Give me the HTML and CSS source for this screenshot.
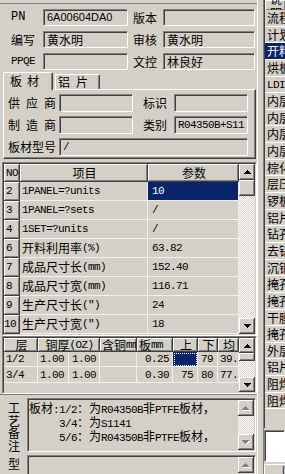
FILE: index.html
```html
<!DOCTYPE html>
<html lang="zh">
<head>
  <meta charset="UTF-8">
  <meta name="viewport" content="width=device-width, initial-scale=1.0">
  <title>板材资料</title>
  <link rel="stylesheet" href="styles.css">
</head>
<body>
  <div class="screen">
    <div class="main">
      <div class="topbar"></div>

      <div class="info">
        <div class="row">
          <span class="lbl m big">PN</span>
          <div class="fld s">6A00604DA0</div>
          <span class="lbl2">版本</span>
          <div class="fld"></div>
        </div>
        <div class="row">
          <span class="lbl">编写</span>
          <div class="fld">黄水明</div>
          <span class="lbl2">审核</span>
          <div class="fld">黄水明</div>
        </div>
        <div class="row">
          <span class="lbl m">PPQE</span>
          <div class="fld"></div>
          <span class="lbl2">文控</span>
          <div class="fld">林良好</div>
        </div>
      </div>

      <div class="tabs">
        <div class="tab active">板材</div>
        <div class="tab">铝片</div>
      </div>
      <div class="page">
        <span class="plbl wide">供应商</span><div class="fld"></div>
        <span class="plbl2">标识</span><div class="fld"></div>
        <span class="plbl wide">制造商</span><div class="fld"></div>
        <span class="plbl2">类别</span><div class="fld m">R04350B+S11</div>
        <span class="plbl">板材型号</span><div class="fld m span3">/</div>
      </div>

      <!-- parameter grid -->
      <div class="box1 grid1">
        <div class="box2">
          <div class="g1">
            <div class="fx m">NO</div><div class="fx c">项目</div><div class="fx c">参数</div>
            <div class="fx m">2</div><div class="cell m">1PANEL=?units</div><div class="cell v m sel">10</div>
            <div class="fx m">3</div><div class="cell m">1PANEL=?sets</div><div class="cell v m">/</div>
            <div class="fx m">4</div><div class="cell m">1SET=?units</div><div class="cell v m">/</div>
            <div class="fx m">6</div><div class="cell">开料利用率<span class="m">(%)</span></div><div class="cell v m">63.82</div>
            <div class="fx m">7</div><div class="cell">成品尺寸长<span class="m">(mm)</span></div><div class="cell v m">152.40</div>
            <div class="fx m">8</div><div class="cell">成品尺寸宽<span class="m">(mm)</span></div><div class="cell v m">116.71</div>
            <div class="fx m">9</div><div class="cell">生产尺寸长<span class="m">(")</span></div><div class="cell v m">24</div>
            <div class="fx m n2">10</div><div class="cell">生产尺寸宽<span class="m">(")</span></div><div class="cell v m">18</div>
          </div>
          <div class="vscroll">
            <div class="sbtn"><svg width="7" height="4" shape-rendering="crispEdges"><path d="M3 0h1v1h1v1h1v1h1v1H0V3h1V2h1V1h1z"/></svg></div>
            <div class="sbtn thumb"></div>
            <div class="track"></div>
            <div class="sbtn"><svg width="7" height="4" shape-rendering="crispEdges"><path d="M0 0h7v1H6v1H5v1H4v1H3V3H2V2H1V1H0z"/></svg></div>
          </div>
        </div>
      </div>

      <!-- copper grid -->
      <div class="box1 grid2">
        <div class="box2">
          <div class="g2">
            <div class="fx c">层</div>
            <div class="fx c wide2">铜厚<span class="m">(OZ)</span></div>
            <div class="fx l">含铜<span class="m">mm</span></div>
            <div class="fx l">板<span class="m">mm</span></div>
            <div class="fx c">上</div>
            <div class="fx c">下</div>
            <div class="fx c">均</div>

            <div class="cell m">1/2</div><div class="cell m">1.00</div><div class="cell m p3">1.00</div><div class="cell"></div>
            <div class="cell m p8">0.25</div><div class="cell focus"></div><div class="cell m r">79</div><div class="cell m">39.50</div>

            <div class="cell m">3/4</div><div class="cell m">1.00</div><div class="cell m p3">1.00</div><div class="cell"></div>
            <div class="cell m p8">0.30</div><div class="cell m r">75</div><div class="cell m r">80</div><div class="cell m">77.50</div>
          </div>
          <div class="vscroll">
            <div class="sbtn b15"><svg width="7" height="4" shape-rendering="crispEdges"><path d="M3 0h1v1h1v1h1v1h1v1H0V3h1V2h1V1h1z"/></svg></div>
            <div class="sbtn thumb small"></div>
            <div class="track"></div>
            <div class="sbtn b15"><svg width="7" height="4" shape-rendering="crispEdges"><path d="M0 0h7v1H6v1H5v1H4v1H3V3H2V2H1V1H0z"/></svg></div>
          </div>
        </div>
      </div>

      <div class="memo">
        <div class="vlabel">工艺备注</div>
        <div class="mbox">
          <div class="mtext">板材<span class="m">:1/2</span>：为<span class="m">R04350B</span>非<span class="m">PTFE</span>板材，
<span class="m">     3/4</span>：为<span class="m">S1141</span>
<span class="m">     5/6</span>：为<span class="m">R04350B</span>非<span class="m">PTFE</span>板材，</div>
          <div class="vscroll">
            <div class="sbtn"><svg width="8" height="5" shape-rendering="crispEdges"><path fill="#fff" d="M4 1h1v1h1v1h1v1h1v1H1V4h1V3h1V2h1z"/><path fill="#808080" d="M3 0h1v1h1v1h1v1h1v1H0V3h1V2h1V1h1z"/></svg></div>
            <div class="track"></div>
            <div class="sbtn"><svg width="8" height="5" shape-rendering="crispEdges"><path fill="#fff" d="M1 1h7v1H7v1H6v1H5v1H4V4H3V3H2V2H1z"/><path fill="#808080" d="M0 0h7v1H6v1H5v1H4v1H3V3H2V2H1V1H0z"/></svg></div>
          </div>
        </div>
      </div>

      <div class="memo model">
        <div class="vlabel">型号</div>
        <div class="mbox">
          <div class="mtext"></div>
          <div class="vscroll">
            <div class="sbtn"><svg width="8" height="5" shape-rendering="crispEdges"><path fill="#fff" d="M4 1h1v1h1v1h1v1h1v1H1V4h1V3h1V2h1z"/><path fill="#808080" d="M3 0h1v1h1v1h1v1h1v1H0V3h1V2h1V1h1z"/></svg></div>
          </div>
        </div>
      </div>
    </div>

    <div class="split"></div>

    <div class="side">
      <div class="list">
        <div class="lhead"><span>说明</span></div>
        <div class="item">流程卡</div>
        <div class="item">计划</div>
        <div class="item sel">开料</div>
        <div class="item">烘板</div>
        <div class="item m">LDI</div>
        <div class="item">内层</div>
        <div class="item">内层</div>
        <div class="item">内层</div>
        <div class="item">内层</div>
        <div class="item">棕化</div>
        <div class="item">层压</div>
        <div class="item">锣板</div>
        <div class="item">铝片</div>
        <div class="item">钻孔</div>
        <div class="item">去钻</div>
        <div class="item">沉铜</div>
        <div class="item">掩孔</div>
        <div class="item">掩孔</div>
        <div class="item">干膜</div>
        <div class="item">掩孔</div>
        <div class="item">外层</div>
        <div class="item">铝片</div>
        <div class="item">阻焊</div>
        <div class="item">阻焊</div>
      </div>
      <div class="sbox"></div>
      <div class="sbtm">|</div>
    </div>
  </div>
</body>
</html>
```

FILE: styles.css
```css
* { box-sizing: border-box; }
body {
  margin: 0;
  width: 285px;
  height: 474px;
  overflow: hidden;
  background: #d4d0c8;
  color: #000;
  font: 12px/14px "Noto Sans CJK SC", sans-serif;
}
.m { font-family: "Liberation Mono", monospace; font-size: 11px; letter-spacing: -0.6px; }
.m.big { font-size: 12px; letter-spacing: 0; }
.s { font-family: "Liberation Sans", sans-serif; font-size: 11px; }

.screen { display: flex; height: 474px; }
.main { width: 258px; flex: none; border-right: 1px solid #fff; overflow: hidden; }
.split { width: 5px; flex: none; }
.side { flex: 1; min-width: 0; border-left: 1px solid #808080; overflow: hidden; }

.topbar { height: 4px; border-bottom: 1px solid #808080; }

/* header fields */
.info {
  height: 68px;
  padding-top: 5px;
  display: grid;
  grid-template-rows: repeat(3, 17px);
  row-gap: 5px;
}
.row { display: grid; grid-template-columns: 43px 85px 35px 92px; }
.lbl { padding-left: 11px; line-height: 17px; white-space: nowrap; }
.lbl2 { padding-left: 5px; line-height: 17px; white-space: nowrap; }
.fld {
  height: 17px;
  border: 1px solid;
  border-color: #808080 #fff #fff #808080;
  box-shadow: inset 1px 1px #404040, inset -1px -1px #d4d0c8;
  padding-left: 3px;
  line-height: 15px;
  white-space: nowrap;
  overflow: hidden;
}

/* tabs */
.tabs { display: flex; align-items: flex-end; height: 17px; padding-left: 3px; }
.tab {
  width: 45px;
  height: 15px;
  margin-left: 2px;
  border: 1px solid;
  border-color: #fff #404040 transparent #fff;
  border-bottom: none;
  border-radius: 2px 2px 0 0;
  box-shadow: inset -1px 0 #808080;
  padding-left: 2px;
  letter-spacing: 6px;
  line-height: 14px;
}
.tab.active {
  width: 50px;
  height: 18px;
  margin: 0 0 -1px 0;
  position: relative;
  z-index: 1;
  background: #d4d0c8;
  padding-left: 6px;
  letter-spacing: 5px;
  line-height: 15px;
}
.page {
  margin-left: 3px;
  width: 253px;
  height: 70px;
  border: 1px solid;
  border-color: #fff #404040 #404040 #fff;
  box-shadow: inset -1px -1px #808080;
  padding-top: 4px;
  display: grid;
  grid-template-columns: 55px 74px 41px 74px;
  grid-template-rows: repeat(3, 18px);
  row-gap: 4px;
}
.page .fld { height: 18px; line-height: 16px; }
.plbl { padding-left: 4px; line-height: 18px; white-space: nowrap; }
.plbl2 { padding-left: 10px; line-height: 18px; white-space: nowrap; }
.wide { letter-spacing: 6px; }
.span3 { grid-column: 2 / 5; }

/* grids */
.box1 {
  margin-left: 2px;
  width: 255px;
  border: 1px solid;
  border-color: #808080 #fff #fff #808080;
}
.box2 {
  height: 100%;
  border: 1px solid;
  border-color: #404040 #d4d0c8 #d4d0c8 #404040;
  display: flex;
}
.grid1 { margin-top: 3px; height: 174px; }
.grid2 { height: 58px; }

.g1 {
  width: 235px;
  display: grid;
  grid-template-columns: 16px 128px 91px;
  grid-template-rows: 18px repeat(8, 19px);
}
.g2 {
  width: 235px;
  display: grid;
  grid-template-columns: 34px 31px 31px 37px 36px 25px 20px 21px;
  grid-template-rows: 14px 15px 16px;
  align-content: start;
}
.g2 .fx { line-height: 12px; }
.fx {
  background: #d4d0c8;
  box-shadow: inset 1px 1px #fff, inset -1px -1px #808080;
  border-right: 1px solid #404040;
  border-bottom: 1px solid #404040;
  padding-left: 2px;
  white-space: nowrap;
  overflow: hidden;
  display: flex;
  align-items: center;
}
.fx.n2 { padding-left: 0; }
.fx.c { justify-content: center; }
.wide2 { grid-column: span 2; }
.cell {
  border-right: 1px solid #f0f0f0;
  border-bottom: 1px solid #f0f0f0;
  padding-left: 2px;
  white-space: nowrap;
  overflow: hidden;
  display: flex;
  align-items: center;
}
.cell.v { padding-left: 4px; }
.cell.p3 { padding-left: 3px; }
.cell.p8 { padding-left: 8px; }
.cell.r { justify-content: flex-end; padding: 0 4px 0 0; }
.cell.sel { background: #0a246a; color: #fff; }
.cell.focus { background: #0a246a; outline: 1px dotted #fff; outline-offset: -2px; }

/* scrollbars */
.vscroll { width: 16px; flex: none; display: flex; flex-direction: column; }
.sbtn {
  height: 16px;
  flex: none;
  background: #d4d0c8;
  box-shadow: inset -1px -1px #404040, inset 1px 1px #fff, inset -2px -2px #808080;
  display: flex;
  align-items: center;
  justify-content: center;
}
.sbtn svg { display: block; }
.sbtn.b15 { height: 15px; }
.thumb.small { height: 8px; }
.track {
  flex: 1;
  background: repeating-conic-gradient(#fff 0 25%, #d4d0c8 0 50%) 0 0 / 2px 2px;
}

/* memo */
.memo {
  height: 59px;
  border-top: 1px solid #808080;
  padding-top: 3px;
  display: flex;
}
.vlabel {
  width: 27px;
  flex: none;
  padding: 4px 7px 0 8px;
  line-height: 12.5px;
  word-break: break-all;
}
.mbox {
  width: 229px;
  height: 54px;
  border: 1px solid;
  border-color: #808080 #fff #fff #808080;
  box-shadow: inset 1px 1px #404040;
  padding: 1px;
  display: flex;
}
.mtext {
  flex: 1;
  padding-top: 2px;
  line-height: 12px;
  white-space: pre;
  overflow: hidden;
}
.model { border-top: none; padding-top: 2px; height: 40px; }
.model .vlabel { padding-top: 0; line-height: 18px; }
.model .mbox { height: 36px; }

/* side list */
.list { height: 428px; border-left: 1px solid #404040; }
.lhead {
  height: 10px;
  overflow: hidden;
  background: #d4d0c8;
  box-shadow: inset 1px 1px #fff, inset -1px -1px #808080;
  padding-left: 5px;
}
.lhead span { display: block; margin-top: -8px; line-height: 14px; }
.item {
  height: 16.65px;
  border-bottom: 1px solid #fff;
  padding-left: 2px;
  line-height: 16px;
  white-space: nowrap;
  overflow: hidden;
}
.item.m { font-size: 11px; }
.item.sel { background: #0a246a; color: #fff; }
.sbox {
  margin-top: 2px;
  height: 32px;
  background: #fff;
  border: 1px solid;
  border-color: #808080 #fff #fff #808080;
  box-shadow: inset 1px 1px #404040;
}
.sbtm {
  margin-top: 2px;
  height: 14px;
  box-shadow: inset 1px 1px #fff;
  text-align: right;
  line-height: 14px;
}
```
